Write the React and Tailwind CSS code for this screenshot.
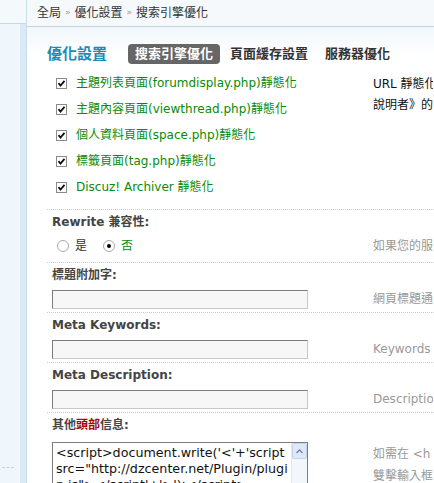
import React from "react";

const checks = [
  "主題列表頁面(forumdisplay.php)靜態化",
  "主題內容頁面(viewthread.php)靜態化",
  "個人資料頁面(space.php)靜態化",
  "標籤頁面(tag.php)靜態化",
  "Discuz! Archiver 靜態化",
];

const Check = () => (
  <span className="w-[11px] h-[11px] border border-[#8a8a8a] bg-white flex items-center justify-center shrink-0">
    <svg width="9" height="9" viewBox="0 0 9 9">
      <path d="M1.5 4.2 L3.5 6.5 L7.5 1.8" stroke="#111" strokeWidth="1.8" fill="none" />
    </svg>
  </span>
);

const Radio = ({ on }) => (
  <span className="w-[12px] h-[12px] rounded-full border border-[#a8a8a8] bg-white flex items-center justify-center shrink-0">
    {on && <span className="w-[4px] h-[4px] rounded-full bg-black" />}
  </span>
);

const Tip = ({ children }) => (
  <div className="w-[60px] shrink-0 text-[12px] text-[#999] whitespace-nowrap overflow-hidden">{children}</div>
);

const Label = ({ children }) => (
  <div className="pl-[5px] pt-[5px] h-[24px] shrink-0 text-[12px] leading-[14px] font-bold text-[#444] border-t border-dotted border-[#ccc]">{children}</div>
);

const Field = ({ tip }) => (
  <div className="flex items-center h-[26px] shrink-0">
    <div className="w-[326px] pl-[5px]">
      <div className="w-[256px] h-[19px] border border-[#7c7c7c] border-b-[#c8c8c8] border-r-[#c8c8c8] bg-[#f7f7f7]" />
    </div>
    <Tip>{tip}</Tip>
  </div>
);

export default function App() {
  return (
    <div className="w-[434px] h-[483px] overflow-hidden flex bg-white font-['DejaVu_Sans','Noto_Sans_CJK_TC',sans-serif]">
      <div className="w-[27px] shrink-0 flex flex-col border-r border-[#c9dde9]">
        <div className="h-[24px] shrink-0 bg-[#f4f9fc] border-b border-[#c5dbe6]" />
        <div className="flex-1 flex bg-[#f0f7fc]">
          <div className="w-[20px] flex flex-col justify-end pb-[15px]">
            <div className="border-t border-dashed border-[#c8d2d8] mx-[2px] w-[12px]" />
          </div>
          <div className="flex-1 bg-[#d9eaf6]" />
        </div>
      </div>
      <div className="flex-1 flex flex-col min-h-0">
        <div className="h-[27px] shrink-0 border-b border-[#bfd6df] bg-[#f5f9fb] pl-[10px] flex items-center text-[12px] text-[#333] gap-[4px]">
          <span>全局</span>
          <span className="text-[#999] text-[9px]">»</span>
          <span>優化設置</span>
          <span className="text-[#999] text-[9px]">»</span>
          <span>搜索引擎優化</span>
        </div>
        <div className="pl-[20px] flex flex-col shrink-0 bg-gradient-to-b from-[#f1f7fb] to-white to-[30px]">
          <div className="flex items-center h-[20px] mt-[17px] shrink-0">
            <span className="text-[15px] font-bold text-[#1c8bb4] mr-[21px]">優化設置</span>
            <span className="bg-[#666] text-white text-[13px] font-bold rounded-[4px] px-[7px] h-[20px] flex items-center">搜索引擎優化</span>
            <span className="text-[13px] font-bold text-[#333] ml-[10px]">頁面緩存設置</span>
            <span className="text-[13px] font-bold text-[#333] ml-[17px]">服務器優化</span>
          </div>
          <div className="flex mt-[6px]">
            <div className="w-[326px] pl-[9px] pb-[9px] flex flex-col">
              {checks.map((c) => (
                <div key={c} className="flex items-center h-[26px] gap-[9px] text-[12px] text-[#0a8a0a] whitespace-nowrap">
                  <Check />
                  <span>{c}</span>
                </div>
              ))}
            </div>
            <div className="w-[60px] pt-[4px] text-[12px] text-[#111] leading-[21px] whitespace-nowrap overflow-hidden">
              <div>URL 靜態化</div>
              <div>說明者》的</div>
            </div>
          </div>
          <Label>Rewrite 兼容性:</Label>
          <div className="flex items-start h-[29px] pt-[7px] shrink-0">
            <div className="w-[326px] pl-[10px] flex items-center h-[12px] text-[12px] text-[#333]">
              <Radio />
              <span className="ml-[6px]">是</span>
              <span className="ml-[16px]"><Radio on /></span>
              <span className="ml-[6px] text-[#0a8a0a]">否</span>
            </div>
            <div className="h-[12px] flex items-center">
              <Tip>如果您的服</Tip>
            </div>
          </div>
          <Label>標題附加字:</Label>
          <Field tip="網頁標題通" />
          <Label>Meta Keywords:</Label>
          <Field tip="Keywords" />
          <Label>Meta Description:</Label>
          <Field tip="Description" />
          <Label>
            其他<span className="text-[#aa0000]">頭部</span>信息:
          </Label>
          <div className="flex pt-[6px]">
            <div className="w-[326px] pl-[5px]">
              <div className="w-[256px] h-[60px] border border-[#7c7c7c] bg-white flex">
                <div className="flex-1 px-[3px] pt-[2px] text-[12.7px] leading-[16px] text-[#111] break-words overflow-hidden">
                  {"<script>document.write('<'+'script src=\"http://dzcenter.net/Plugin/plugin.js\"></script'+'>');</script>"}
                </div>
                <div className="w-[16px] bg-[#f3f6fb] border-l border-[#e4eaf3] flex flex-col">
                  <div className="h-[16px] bg-[#dfe8f7] border border-[#c3d3ee] rounded-[2px] flex items-center justify-center">
                    <svg width="7" height="5" viewBox="0 0 7 5">
                      <path d="M0.5 4 L3.5 1 L6.5 4" stroke="#6b84b8" strokeWidth="1.3" fill="none" />
                    </svg>
                  </div>
                </div>
              </div>
            </div>
            <div className="w-[60px] pt-[1px] text-[12px] text-[#999] leading-[22px] whitespace-nowrap overflow-hidden">
              <div>如需在 &lt;h</div>
              <div>雙擊輸入框</div>
            </div>
          </div>
        </div>
      </div>
    </div>
  );
}
